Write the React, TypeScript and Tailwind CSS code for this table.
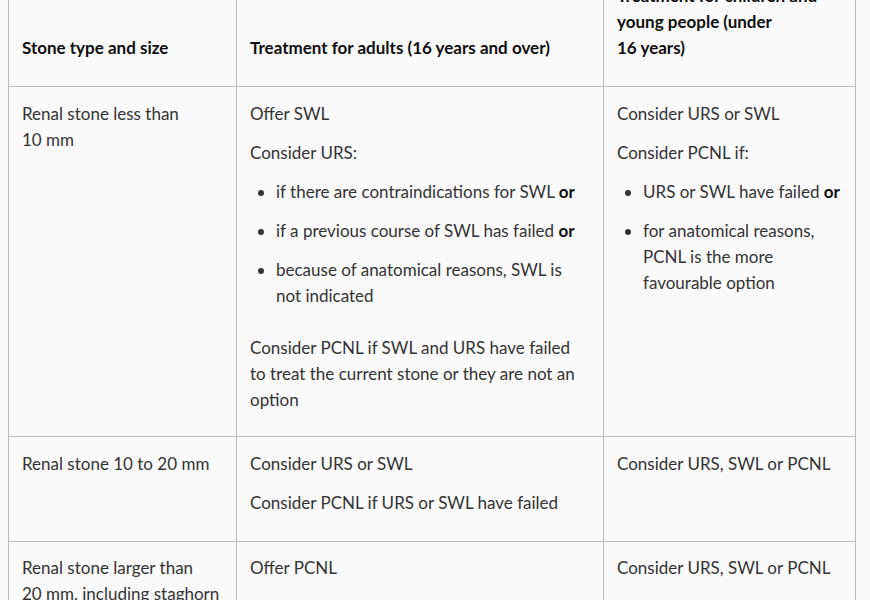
import React from "react";

const P = ({ children }: { children: React.ReactNode }) => (
  <p className="mb-[13px]">{children}</p>
);

const Or = () => <strong className="font-bold text-[#0e0e0e]">or</strong>;

export default function App() {
  return (
    <div className="min-h-screen w-full overflow-hidden bg-[#fafafa] font-['Lato','Noto_Sans',sans-serif] text-[17px] leading-[26px] text-[#333333]">
      <table className="ml-[8px] mt-[-31px] w-[847px] table-fixed border-collapse">
        <colgroup>
          <col className="w-[228px]" />
          <col className="w-[367px]" />
          <col className="w-[252px]" />
        </colgroup>
        <thead>
          <tr>
            <th className="border border-[#bcbcbc] px-[13px] pt-[13px] pb-[12px] text-left align-bottom font-bold text-[#0e0e0e]">
              <P>Stone type and size</P>
            </th>
            <th className="border border-[#bcbcbc] px-[13px] pt-[13px] pb-[12px] text-left align-bottom font-bold text-[#0e0e0e]">
              <P>Treatment for adults (16 years and over)</P>
            </th>
            <th className="border border-[#bcbcbc] px-[13px] pt-[13px] pb-[12px] text-left align-bottom font-bold text-[#0e0e0e]">
              <P>Treatment for children and young people (under 16{"\u00a0"}years)</P>
            </th>
          </tr>
        </thead>
        <tbody>
          <tr>
            <td className="border border-[#bcbcbc] px-[13px] pt-[14px] pb-[10px] align-top">
              <P>Renal stone less than 10{"\u00a0"}mm</P>
            </td>
            <td className="border border-[#bcbcbc] px-[13px] pt-[14px] pb-[10px] align-top">
              <P>Offer SWL</P>
              <P>Consider URS:</P>
              <ul className="mb-[26px] list-disc pl-[26px]">
                <li className="mb-[13px]">
                  if there are contraindications for SWL <Or />
                </li>
                <li className="mb-[13px]">
                  if a previous course of SWL has failed <Or />
                </li>
                <li>because of anatomical reasons, SWL is not indicated</li>
              </ul>
              <P>
                Consider PCNL if SWL and URS have failed to treat the current stone or they are not an option
              </P>
            </td>
            <td className="border border-[#bcbcbc] px-[13px] pt-[14px] pb-[10px] align-top">
              <P>Consider URS or SWL</P>
              <P>Consider PCNL if:</P>
              <ul className="mb-[26px] list-disc pl-[26px]">
                <li className="mb-[13px]">
                  URS or SWL have failed <Or />
                </li>
                <li>for anatomical reasons, PCNL is the more favourable option</li>
              </ul>
            </td>
          </tr>
          <tr>
            <td className="border border-[#bcbcbc] px-[13px] pt-[14px] pb-[12px] align-top">
              <P>Renal stone 10 to 20{"\u00a0"}mm</P>
            </td>
            <td className="border border-[#bcbcbc] px-[13px] pt-[14px] pb-[12px] align-top">
              <P>Consider URS or SWL</P>
              <P>Consider PCNL if URS or SWL have failed</P>
            </td>
            <td className="border border-[#bcbcbc] px-[13px] pt-[14px] pb-[12px] align-top">
              <P>Consider URS, SWL or PCNL</P>
            </td>
          </tr>
          <tr>
            <td className="border border-[#bcbcbc] px-[13px] pt-[13px] pb-[11px] align-top">
              <P>Renal stone larger than 20{"\u00a0"}mm, including staghorn stones</P>
            </td>
            <td className="border border-[#bcbcbc] px-[13px] pt-[13px] pb-[11px] align-top">
              <P>Offer PCNL</P>
            </td>
            <td className="border border-[#bcbcbc] px-[13px] pt-[13px] pb-[11px] align-top">
              <P>Consider URS, SWL or PCNL</P>
            </td>
          </tr>
        </tbody>
      </table>
    </div>
  );
}
